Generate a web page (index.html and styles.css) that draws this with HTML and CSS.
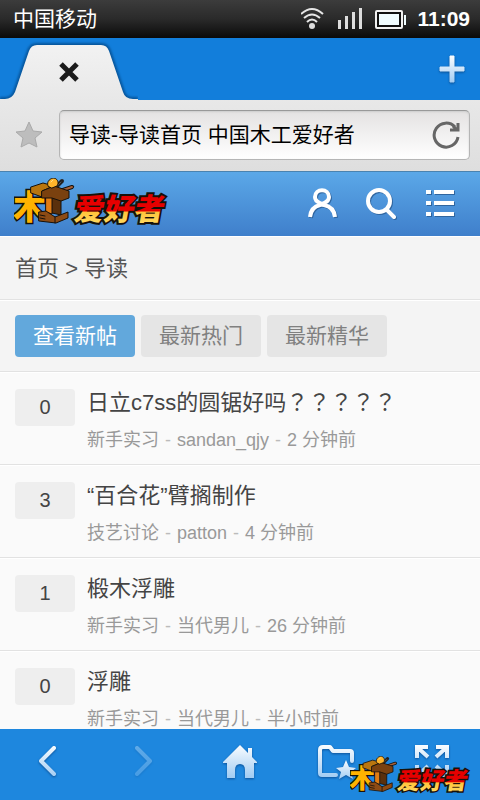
FILE: index.html
```html
<!DOCTYPE html>
<html lang="zh-CN">
<head>
<meta charset="utf-8">
<meta name="viewport" content="width=device-width, initial-scale=1">
<title>导读-导读首页 中国木工爱好者</title>
<link rel="stylesheet" href="styles.css">
</head>
<body>
<svg class="defs" width="0" height="0" aria-hidden="true">
  <defs>
    <linearGradient id="ice" x1="0" y1="0" x2="0" y2="1"><stop offset="0" stop-color="#fafdff"/><stop offset="1" stop-color="#a3cdf3"/></linearGradient>
    <linearGradient id="ice-area" gradientUnits="userSpaceOnUse" x1="0" y1="4" x2="0" y2="36"><stop offset="0" stop-color="#fafdff"/><stop offset="1" stop-color="#a3cdf3"/></linearGradient>
    <linearGradient id="tab-fill" x1="0" y1="0" x2="0" y2="1"><stop offset="0" stop-color="#f2f2f2"/><stop offset="1" stop-color="#e8e8e8"/></linearGradient>
    <linearGradient id="fire" gradientUnits="userSpaceOnUse" x1="0" y1="-25" x2="0" y2="3"><stop offset="0.58" stop-color="#e60000"/><stop offset="0.6" stop-color="#ffc43a"/><stop offset="1" stop-color="#ffd85e"/></linearGradient>
    <symbol id="logo" viewBox="0 0 156 48">
      <text class="logo-mu" x="-1" y="41">木</text>
      <g stroke="#17110a" stroke-width="1" stroke-linejoin="round" stroke-linecap="round">
        <path d="M42 9 48 3" stroke="#222" stroke-width="4"/>
        <path d="M42 9 47 4" stroke="#555" stroke-width="1"/>
        <path d="M46 13 58 9" stroke-width="4"/>
        <path d="M46 13 58 9" stroke="#a5603a" stroke-width="2"/>
        <path fill="#5a300c" d="M38 19 47 21 47 37 38 35z"/>
        <path fill="#e07c14" d="M32 18 38 19 38 36 32 34z"/>
        <path fill="#b9760f" d="M17 9 29 5 40 8 28 13 28 19 17 15z"/>
        <path fill="#7a410f" d="M28 13 40 8 55 13 55 20 47 23 38 20 28 20z"/>
        <path fill="#8d4b14" d="M25 34 32 33 41 39 54 34 54 40 42 45 25 43z"/>
        <path fill="none" d="M41 39V45M26 37 31 38M26 40 31 41"/>
        <path fill="#ffb52b" d="M34 8C32 3 37 0 40 0 44 1 45 5 43 8L38 10z"/>
        <path fill="none" stroke="#ffe08a" d="M37 4 39 2"/>
      </g>
      <text class="logo-name" transform="translate(59 42) skewX(-10)">爱好者</text>
    </symbol>
  </defs>
</svg>
<div class="phone">
  <div class="status">
    <span class="carrier">中国移动</span>
    <svg class="signals" width="108" height="26" viewBox="0 0 108 26" aria-hidden="true">
      <g fill="none" stroke="#e6e6e6" stroke-width="2">
        <path d="M0 8Q11 -2 22 8M3 12Q11 5 19 12M6 16Q11 11 16 16"/>
      </g>
      <circle cx="11" cy="20" r="3" fill="#ddd"/>
      <path d="M37 14h3v9h-3zM44 10h3v13h-3zM51 6h3v17h-3zM58 2h3v21h-3z" fill="#ddd"/>
      <rect x="75" y="5" width="26" height="17" rx="1" fill="#111" stroke="#f1f1f1" stroke-width="2"/>
      <path d="M78 8h20v11h-20zM103 9h2v10h-2z" fill="#f0fcff"/>
    </svg>
    <time class="clock">11:09</time>
  </div>
  <div class="tabstrip">
    <button class="page-tab" type="button" aria-label="关闭标签页">
      <svg width="138" height="62" viewBox="0 0 138 62">
        <path class="tab-glow" d="M0 61H5Q12 61 15 54L29 13Q31 7 37 7H101Q107 7 109 13L123 54Q125 61 133 61H138"/>
        <path fill="url(#tab-fill)" d="M0 62V61H5Q12 61 15 54L29 13Q31 7 37 7H101Q107 7 109 13L123 54Q125 61 133 61H138V62z"/>
        <path d="M61 26 77 42M77 26 61 42" stroke="#1b1b1b" stroke-width="5"/>
      </svg>
    </button>
    <button class="new-tab" type="button" aria-label="新建标签页">
      <svg width="28" height="30" viewBox="0 0 28 30"><path d="M12 2h4v11h10v4h-10v11h-4v-11h-10v-4h10z" fill="url(#ice)" stroke="url(#ice)" stroke-width="1" stroke-linejoin="round"/></svg>
    </button>
  </div>
  <form class="address">
    <button class="fav" type="button" aria-label="收藏">
      <svg width="28" height="28" viewBox="0 0 28 28"><path d="M14 1 18 10 27 11 20 17 22 26 14 22 6 26 8 17 1 11 10 10z" fill="#bdbdbd" stroke="#aaa" stroke-linejoin="round"/></svg>
    </button>
    <div class="urlbox">
      <input class="url" type="text" aria-label="地址" value="导读-导读首页 中国木工爱好者">
      <button class="reload" type="button" aria-label="刷新">
        <svg width="28" height="28" viewBox="0 0 28 28" fill="none" stroke="#666" stroke-width="3"><path d="M26 16A12 12 0 1 1 23 6"/><path d="M26 2V9H18M21 5 25 9"/></svg>
      </button>
    </div>
  </form>
  <main class="page">
    <header class="site-head">
      <a class="brand" href="#" aria-label="首页"><svg width="156" height="48"><use href="#logo"/></svg></a>
      <nav class="tools">
        <a href="#" aria-label="我的"><svg width="32" height="32" viewBox="0 0 32 32"><path d="M4 29Q5 19 14 17V15Q9 13 9 9C9 0 23 0 23 9Q23 13 18 15V17Q28 19 29 29"/></svg></a>
        <a href="#" aria-label="搜索"><svg width="32" height="32" viewBox="0 0 32 32"><circle cx="14" cy="13" r="11"/><path d="M22 22 29 29" stroke-linecap="round"/></svg></a>
        <a href="#" aria-label="菜单"><svg width="32" height="32" viewBox="0 0 32 32"><path d="M2 4H7M10 4H30M2 15H7M10 15H30M2 26H7M10 26H30"/></svg></a>
      </nav>
    </header>
    <nav class="crumbs"><a href="#">首页</a> &gt; <a href="#">导读</a></nav>
    <nav class="filters">
      <a class="filter active" href="#">查看新帖</a>
      <a class="filter" href="#">最新热门</a>
      <a class="filter" href="#">最新精华</a>
    </nav>
    <ul class="threads">
      <li class="thread"><span class="count">0</span><div class="info"><a class="title" href="#">日立c7ss的圆锯好吗<span class="marks" lang="zh-TW">？？？？？</span></a><p class="meta">新手实习 <span class="sep">-</span> sandan_qjy <span class="sep">-</span> 2 分钟前</p></div></li>
      <li class="thread"><span class="count">3</span><div class="info"><a class="title" href="#">“百合花”臂搁制作</a><p class="meta">技艺讨论 <span class="sep">-</span> patton <span class="sep">-</span> 4 分钟前</p></div></li>
      <li class="thread"><span class="count">1</span><div class="info"><a class="title" href="#">椴木浮雕</a><p class="meta">新手实习 <span class="sep">-</span> 当代男儿 <span class="sep">-</span> 26 分钟前</p></div></li>
      <li class="thread"><span class="count">0</span><div class="info"><a class="title" href="#">浮雕</a><p class="meta">新手实习 <span class="sep">-</span> 当代男儿 <span class="sep">-</span> 半小时前</p></div></li>
    </ul>
  </main>
  <nav class="toolbar">
    <button type="button" aria-label="后退"><svg width="40" height="40" viewBox="0 0 40 40"><path class="line" d="M26 7 13 20 26 33"/></svg></button>
    <button type="button" aria-label="前进" disabled><svg width="40" height="40" viewBox="0 0 40 40"><path class="line" d="M13 7 26 20 13 33"/></svg></button>
    <button type="button" aria-label="主页"><svg width="40" height="40" viewBox="0 0 40 40"><path fill="url(#ice-area)" d="M20 4 28 12V7H32V16L37 21V22H34V37H25V29Q25 23 20 23T15 29V37H7V22H3V21z"/></svg></button>
    <button type="button" aria-label="收藏夹"><svg width="40" height="40" viewBox="0 0 40 40"><path class="thin" d="M20 34H6Q4 34 4 32V9Q4 6 7 6H14L17 10H34Q36 10 36 12V20"/><path fill="url(#ice)" d="M30 19 33 26 40 27 35 31 37 38 30 34 23 38 25 31 20 27 27 26z"/></svg></button>
    <button type="button" aria-label="全屏"><svg width="40" height="40" viewBox="0 0 40 40"><path class="thin corner" d="M5 17V6H16M5 6 16 16M24 6H35V17M35 6 24 16M5 24V35H16M5 35 16 25M24 35H35V24M35 35 24 25"/></svg></button>
    <svg class="watermark" width="122" height="38" aria-hidden="true"><use href="#logo"/></svg>
  </nav>
</div>
</body>
</html>
```
FILE: styles.css
```css
* { box-sizing: border-box; }
body {
  margin: 0;
  font-family: "Liberation Sans", "Noto Sans CJK SC", sans-serif;
  color: #444;
  background: #fafafa;
}
a { color: inherit; text-decoration: none; }
button { padding: 0; border: 0; background: none; }
svg { display: block; }
.defs { position: absolute; }
.phone { display: flex; flex-direction: column; height: 100vh; overflow: hidden; }

.status {
  display: flex; align-items: center; flex: none; height: 38px; padding: 0 10px 0 13px;
  color: #fff; font-size: 21px; line-height: 38px;
  background: linear-gradient(#3c3c3c, #2a2a2a 50%, #0a0a0a);
}
.signals { margin-left: auto; margin-right: 8px; }
.clock { font-weight: bold; }

.tabstrip { display: flex; flex: none; justify-content: space-between; align-items: center; height: 62px; padding-right: 14px; background: #127edb; }
.tab-glow { fill: none; stroke: #07569c; stroke-width: 4; filter: blur(1px); }
.new-tab svg { filter: drop-shadow(0 1px 1px #0a4f92); }

.address {
  display: flex; flex: none; align-items: center; gap: 16px; height: 71px; margin: 0; padding: 0 10px 2px 15px;
  background: linear-gradient(#e8e8e8, #dedede);
}
.urlbox {
  display: flex; flex: 1; align-items: center; height: 50px; padding: 0 9px;
  border: 1px solid #b5b5b5; border-top-color: #999; border-radius: 5px;
  background: linear-gradient(#e4e2e2, #fff);
  box-shadow: inset 0 1px 2px #ccc;
}
.url { flex: 1; min-width: 0; padding: 0; border: 0; outline: 0; background: none; color: #000; font: inherit; font-size: 21px; line-height: 30px; }

.page { flex: 1; min-height: 0; overflow: hidden; background: #fafafa; }
.site-head {
  display: flex; align-items: center; justify-content: space-between; height: 65px; padding: 0 24px 0 14px;
  border-top: 1px solid #4a83b0;
  background: linear-gradient(#5ba8e8, #3f7fcb);
}
.brand { margin-bottom: 4px; }
.tools { display: flex; gap: 27px; }
.tools svg { fill: none; stroke: #fff; stroke-width: 4; filter: drop-shadow(1px 1px 0 #2f659f); }
.logo-mu { font: 900 33px "Noto Sans CJK SC", sans-serif; fill: #ffb300; stroke: #17110a; stroke-width: 3; paint-order: stroke; }
.logo-name { font: 900 30px "Noto Sans CJK SC", sans-serif; fill: url(#fire); stroke: #17110a; stroke-width: 4; paint-order: stroke; }

.crumbs { height: 64px; border-top: 1px solid #fff; border-bottom: 1px solid #e2e2e2; padding-left: 15px; font-size: 22px; line-height: 64px; color: #555; background: #f4f4f4; }
.filters { display: flex; gap: 6px; padding: 14px 15px; border-top: 1px solid #fff; border-bottom: 1px solid #e2e2e2; background: #f4f4f4; }
.filter { width: 120px; border-radius: 4px; text-align: center; font-size: 21px; line-height: 42px; color: #808080; background: #e5e5e5; }
.filter.active { color: #fff; background: #62a8dc; }

.threads { margin: 0; padding: 0; list-style: none; }
.thread { display: flex; gap: 12px; height: 93px; padding: 16px 15px 0; border-top: 1px solid #fff; border-bottom: 1px solid #e2e2e2; }
.count { flex: none; width: 60px; height: 37px; border-radius: 4px; text-align: center; font-size: 20px; line-height: 37px; background: #eee; }
.title { display: block; font-size: 22px; line-height: 28px; color: #444; }
.marks { font-family: "Noto Sans CJK TC", sans-serif; line-height: 1; }
.meta { margin: 11px 0 0; font-size: 18px; line-height: 24px; color: #999; }
.sep { margin: 0 1px; color: #bbb; }

.toolbar { position: relative; display: flex; flex: none; height: 71px; background: #1e87de; }
.toolbar button { display: flex; flex: 1; justify-content: center; padding-top: 12px; }
.toolbar button svg { overflow: visible; filter: drop-shadow(0 1px 1px #0d5299); }
.toolbar button:disabled { opacity: 0.3; }
.line, .thin { fill: none; stroke: url(#ice-area); stroke-width: 4; stroke-linecap: round; stroke-linejoin: round; }
.thin { stroke-width: 4; }
.corner { stroke-linecap: butt; stroke-linejoin: miter; }
.watermark { position: absolute; right: 8px; bottom: 6px; }
```
